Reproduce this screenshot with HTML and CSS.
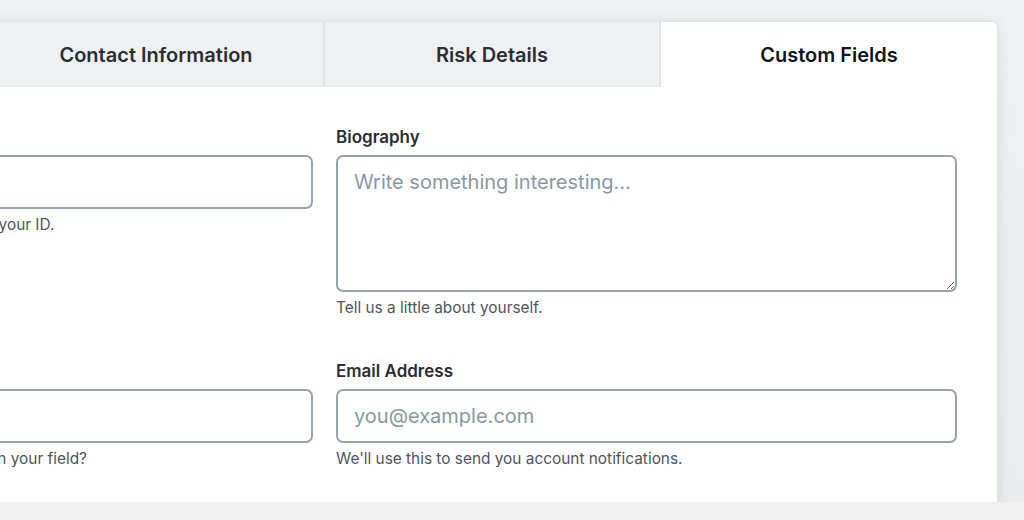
FILE: index.html
```html
<!DOCTYPE html>
<html lang="en">
<head>
<meta charset="utf-8">
<title>Profile</title>
<link rel="stylesheet" href="styles.css">
</head>
<body>
<div class="viewport">
  <div class="card">
    <div class="tabs">
      <div class="tab">Personal Details</div>
      <div class="tab">Contact Information</div>
      <div class="tab">Risk Details</div>
      <div class="tab active">Custom Fields</div>
    </div>
    <div class="form">
      <div class="field">
        <label class="label" for="nid">National ID Number</label>
        <input class="input" id="nid" type="text">
        <p class="help">Enter the number exactly as it appears on your ID.</p>
      </div>
      <div class="field">
        <label class="label" for="bio">Biography</label>
        <textarea class="input textarea" id="bio" placeholder="Write something interesting..."></textarea>
        <p class="help">Tell us a little about yourself.</p>
      </div>
      <div class="field">
        <label class="label" for="yrs">Years of Experience</label>
        <input class="input" id="yrs" type="text">
        <p class="help">How many years of practice do you have in your field?</p>
      </div>
      <div class="field">
        <label class="label" for="email">Email Address</label>
        <input class="input" id="email" type="email" placeholder="you@example.com">
        <p class="help">We'll use this to send you account notifications.</p>
      </div>
    </div>
  </div>
</div>
<div class="band"></div>
</body>
</html>
```
FILE: styles.css
```css
* { box-sizing: border-box; }
html, body { margin: 0; padding: 0; }
body {
  font-family: Inter, "Noto Sans", "Liberation Sans", sans-serif;
  background: #efefef;
  color: #2a2e33;
}
.viewport {
  height: 502px;
  overflow: hidden;
  background: linear-gradient(#eef0f2, #eaebed);
  padding-top: 21px;
}
.card {
  width: 1346px;
  margin-left: -348px;
  background: #fff;
  border: 1px solid #dfe2e6;
  border-radius: 7px;
  box-shadow: 0 2px 14px rgba(30, 40, 60, 0.09);
  overflow: hidden;
  min-height: 520px;
}
.tabs {
  display: grid;
  grid-template-columns: repeat(4, 1fr);
  height: 65px;
}
.tab {
  display: flex;
  align-items: center;
  justify-content: center;
  padding-top: 2px;
  background: #eff0f2;
  border-right: 2px solid #dfe3e8;
  border-bottom: 1px solid #e6e8eb;
  font-size: 20px;
  font-weight: 600;
  color: #2b2f35;
}
.tab.active {
  background: #fff;
  border-right: none;
  border-bottom-color: #fff;
  color: #111418;
}
.form {
  display: grid;
  grid-template-columns: 1fr 1fr;
  align-items: start;
  column-gap: 23px;
  row-gap: 43px;
  padding: 40px 40px 40px 39px;
}
.field {
  display: flex;
  flex-direction: column;
}
.label {
  font-size: 17px;
  line-height: 20px;
  font-weight: 600;
  color: #2a2e33;
  margin-bottom: 8px;
}
.input {
  display: block;
  width: 100%;
  height: 54px;
  border: 2px solid #98a4ac;
  border-radius: 7px;
  padding: 0 16px;
  font-family: inherit;
  font-size: 20px;
  color: #2a2e33;
  background: #fff;
  outline: none;
}
.textarea {
  height: 137px;
  padding-top: 12px;
  resize: vertical;
  line-height: 26px;
}
.input::placeholder { color: #8a98a2; }
.help {
  margin: 6px 0 0;
  font-size: 15.4px;
  line-height: 20px;
  color: #4e555c;
}
.band {
  height: 18px;
  background: #efefef;
}
```
